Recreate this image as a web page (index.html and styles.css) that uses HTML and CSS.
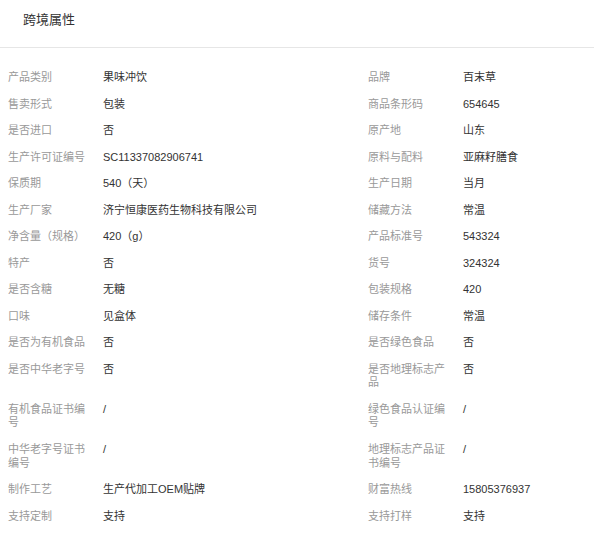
FILE: index.html
```html
<!DOCTYPE html>
<html lang="zh-CN">
<head>
<meta charset="utf-8">
<title>跨境属性</title>
<link rel="stylesheet" href="styles.css">
</head>
<body>
<div class="panel">
  <div class="panel-head">跨境属性</div>
  <div class="attrs">
    <div class="k">产品类别</div><div class="v">果味冲饮</div><div class="k">品牌</div><div class="v">百末草</div>
    <div class="k">售卖形式</div><div class="v">包装</div><div class="k">商品条形码</div><div class="v">654645</div>
    <div class="k">是否进口</div><div class="v">否</div><div class="k">原产地</div><div class="v">山东</div>
    <div class="k">生产许可证编号</div><div class="v">SC11337082906741</div><div class="k">原料与配料</div><div class="v">亚麻籽膳食</div>
    <div class="k">保质期</div><div class="v">540（天）</div><div class="k">生产日期</div><div class="v">当月</div>
    <div class="k">生产厂家</div><div class="v">济宁恒康医药生物科技有限公司</div><div class="k">储藏方法</div><div class="v">常温</div>
    <div class="k">净含量（规格）</div><div class="v">420（g）</div><div class="k">产品标准号</div><div class="v">543324</div>
    <div class="k">特产</div><div class="v">否</div><div class="k">货号</div><div class="v">324324</div>
    <div class="k">是否含糖</div><div class="v">无糖</div><div class="k">包装规格</div><div class="v">420</div>
    <div class="k">口味</div><div class="v">见盒体</div><div class="k">储存条件</div><div class="v">常温</div>
    <div class="k">是否为有机食品</div><div class="v">否</div><div class="k">是否绿色食品</div><div class="v">否</div>
    <div class="k">是否中华老字号</div><div class="v">否</div><div class="k">是否地理标志产品</div><div class="v">否</div>
    <div class="k">有机食品证书编号</div><div class="v">/</div><div class="k">绿色食品认证编号</div><div class="v">/</div>
    <div class="k">中华老字号证书编号</div><div class="v">/</div><div class="k">地理标志产品证书编号</div><div class="v">/</div>
    <div class="k">制作工艺</div><div class="v">生产代加工OEM贴牌</div><div class="k">财富热线</div><div class="v">15805376937</div>
    <div class="k">支持定制</div><div class="v">支持</div><div class="k">支持打样</div><div class="v">支持</div>
  </div>
</div>
</body>
</html>
```
FILE: styles.css
```css
html, body {
  margin: 0;
  padding: 0;
  background: #fff;
}
body {
  font-family: "Liberation Sans", "Noto Sans CJK SC", sans-serif;
  color: #333;
}
.panel-head {
  box-sizing: border-box;
  height: 48px;
  padding: 11px 0 0 23px;
  font-size: 13px;
  line-height: 18px;
  color: #333;
  border-bottom: 1px solid #e6e6e6;
}
.attrs {
  display: grid;
  grid-template-columns: 95px 265px 95px 1fr;
  padding: 16.8px 0 0 8px;
  font-size: 11px;
  line-height: 13.7px;
}
.k, .v {
  padding: 6.4px 0;
  word-break: break-all;
}
.k {
  color: #999;
  padding-right: 10px;
}
.v {
  color: #333;
}
```
